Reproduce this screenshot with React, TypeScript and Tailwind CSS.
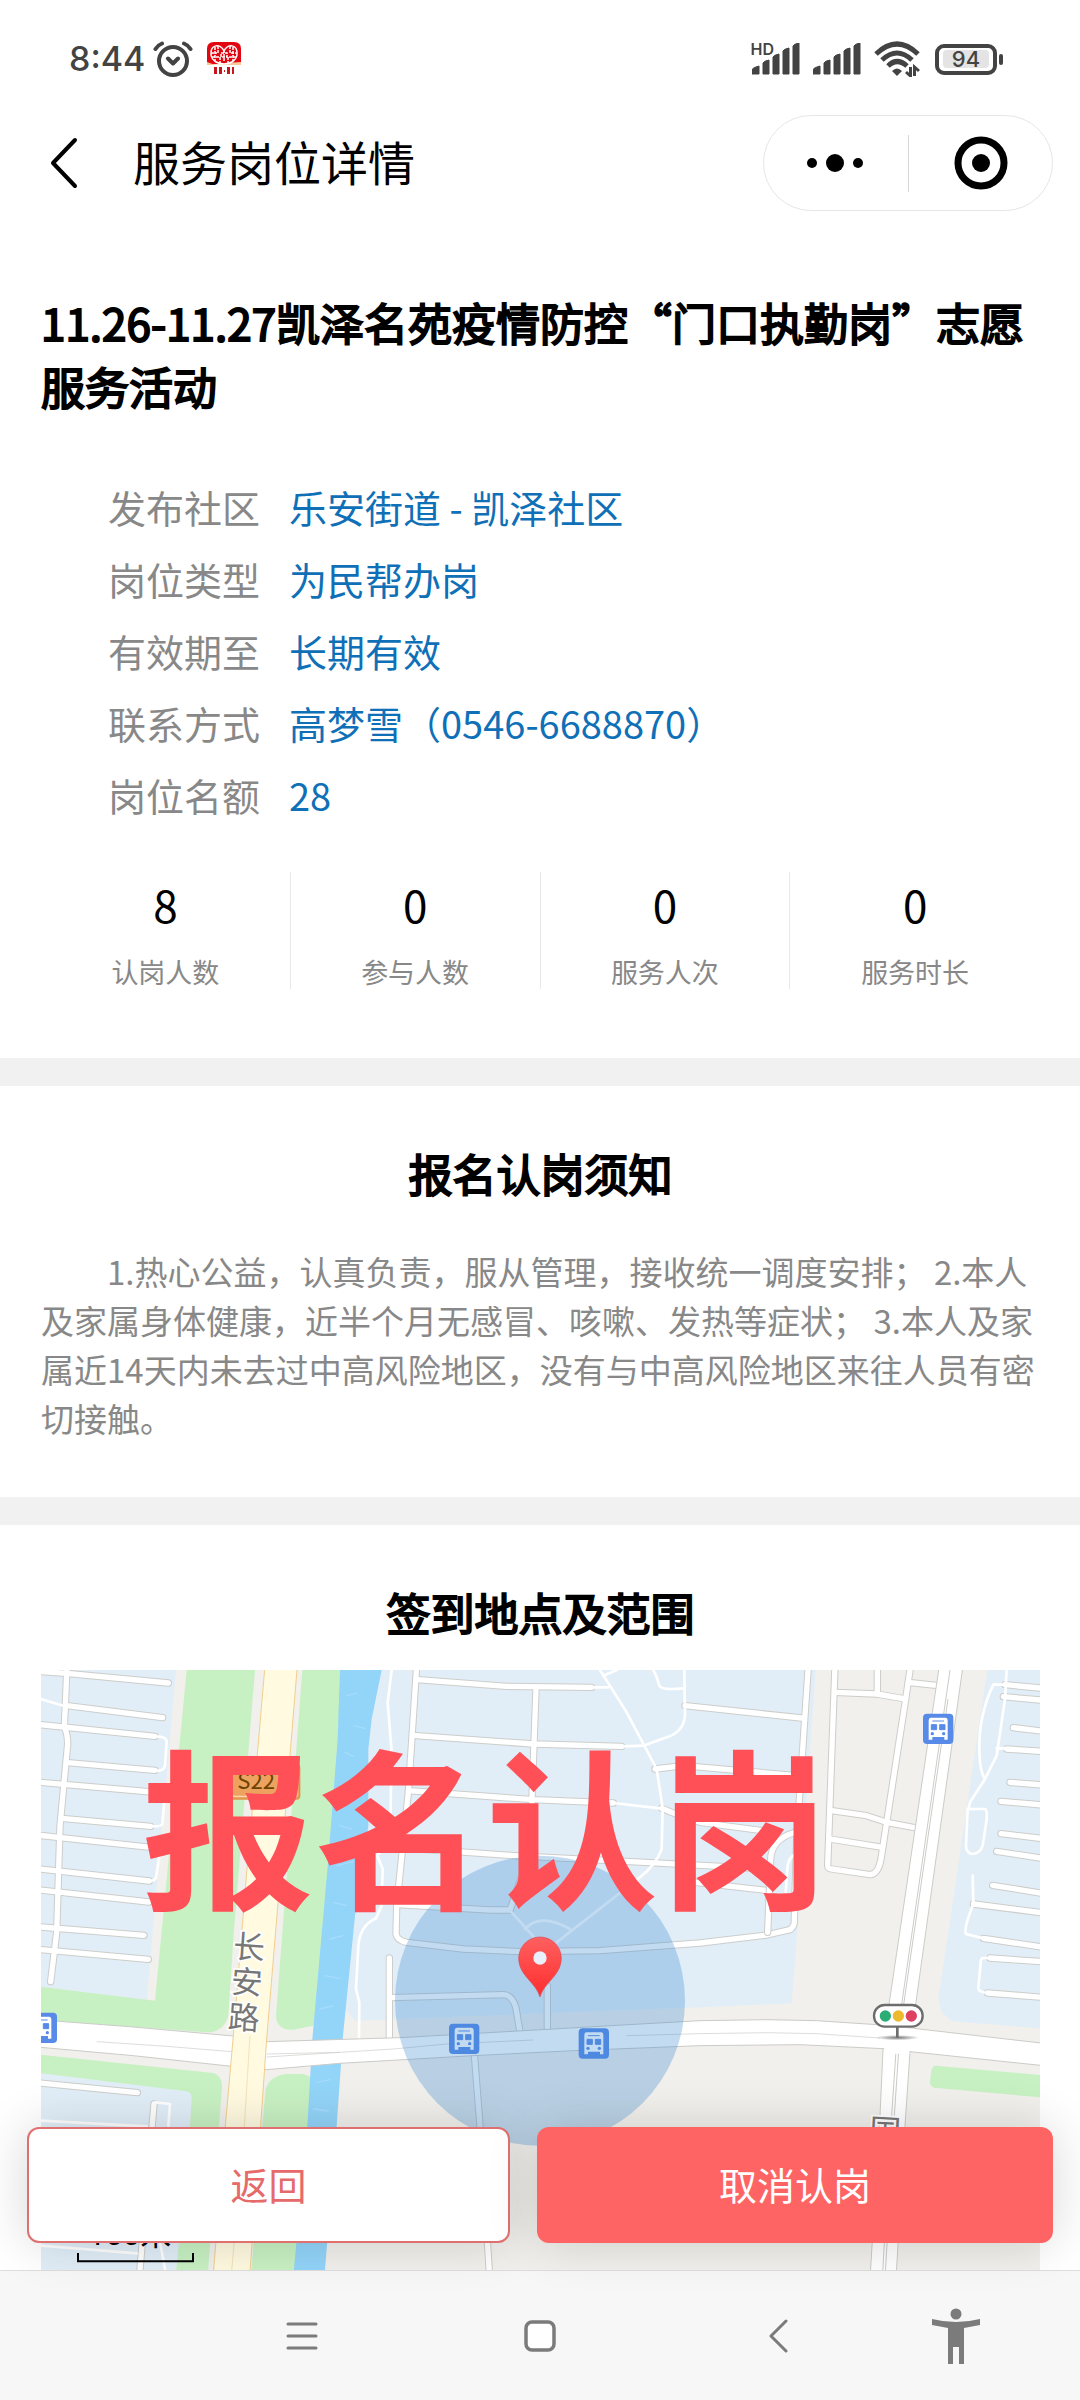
import clsx from 'clsx';

const details = [
  { label: '发布社区', value: '乐安街道 - 凯泽社区' },
  { label: '岗位类型', value: '为民帮办岗' },
  { label: '有效期至', value: '长期有效' },
  { label: '联系方式', value: '高梦雪（0546-6688870）' },
  { label: '岗位名额', value: '28' },
];

const stats = [
  { label: '认岗人数', value: 8 },
  { label: '参与人数', value: 0 },
  { label: '服务人次', value: 0 },
  { label: '服务时长', value: 0 },
];

// street geometry, split into west / centre / east blocks
const westStreets = [
  'M201 80L193 265Q203 285 203 315L180 560L170 880L152 1028',
  'M100 96L200 103L505 132',
  'M201 200L488 236',
  'M100 255L465 292',
  'M203 371L465 394',
  'M100 428L200 437L490 462',
  'M185 538L452 562',
  'M100 587L452 625',
  'M100 688L448 726',
  'M100 751L447 789',
  'M100 862L432 889',
  'M100 930L445 961',
  'M100 1330L412 1361',
  'M462 1395L420 1890',
];

const westPaths = [
  'M123 180L200 203',
  'M465 292Q502 292 500 310L495 380Q492 396 465 396',
  'M495 462L487 555Q485 563 455 562',
  'M480 640L468 715Q465 726 448 726',
  'M465 1390L510 1395L505 1460',
  'M123 1445L440 1462',
  'M123 1820L410 1843',
  'M480 1810L495 1890',
];

const centreStreets = [
  'M230 80L205 460L170 800L168 885Q172 905 200 910L370 930L540 938L780 935L1080 912L1280 888L1350 872Q1365 862 1363 840L1370 600L1405 80',
  'M232 122L500 142L755 145',
  'M228 290L580 315L845 322',
  'M588 150L570 640L510 813',
  'M205 455L580 482L820 492',
  'M195 627L520 650L800 664L1200 685L1290 692',
  'M175 797L450 813L510 813',
  'M1020 725L1285 755',
  'M148 957V1195',
  'M150 1076L490 1067Q518 1068 528 1108L540 1180',
  'M622 1040V1180',
  'M403 1245L420 1460L448 1900',
  'M1035 200L1385 237',
  'M945 390L1030 380L1370 410',
  'M965 508L1020 530L1080 550L1290 578',
];

const centrePaths = [
  'M155 93L143 190L155 340L150 600L112 650L128 690L125 800L108 838Q60 860 55 920L48 1050L58 1090L57 1195',
  'M780 93L860 220L950 390L968 508L965 630Q950 675 900 715L650 910',
  'M755 145H805',
  'M790 110L830 93',
  'M940 93Q950 110 958 140Q965 155 1030 148',
  'M1033 93L1035 230Q1030 280 980 295L910 320L850 322',
  'M820 492L960 508',
  'M515 820L580 892',
  'M555 870Q600 820 690 870',
];

const eastStreets = [
  'M405 80L383 680Q383 688 395 690L510 707Q535 705 543 660L560 550L617 180L632 80',
  'M405 160L530 165L617 180',
  'M532 80V165',
  'M625 130L715 140',
  'M395 515L500 530L560 550L655 568',
  'M390 600L548 625',
  'M285 580Q215 600 212 660L203 880',
  'M915 137L1040 149',
  'M910 173L1040 185',
  'M940 266L1040 278',
  'M920 330L1040 338',
  'M930 430L1040 439',
  'M903 487L1040 499',
  'M903 584L1040 600',
  'M890 637L1040 660',
  'M878 739L1040 765',
  'M820 795L1040 823',
  'M850 898L1040 926',
  'M870 957L1040 969',
  'M863 1062L1040 1076',
];

const eastPaths = [
  'M290 645Q265 650 262 690L255 790L215 815',
  'M920 93L915 180L890 350L855 420L810 490L805 510H855Q862 512 860 540L848 620Q840 645 815 645Q798 640 798 620L803 510',
  'M915 137L880 137Q835 230 838 340Q840 400 855 420',
  'M890 328H920',
  'M818 710L820 795Q790 870 798 885L850 898',
  'M870 957H850Q842 957 842 970L835 1048Q835 1060 863 1062',
];

const busStops = [
  { x: 80, y: 1121 },
  { x: 1347, y: 1154 },
  { x: 1736, y: 1168 },
];

const headingClass = 'text-[44px] leading-[64px] font-normal [-webkit-text-stroke:2px_#000]';

function Streets({ lines, paths, x = 0 }: { lines: string[]; paths: string[]; x?: number }) {
  return (
    <g transform={`translate(${x} 0)`} fill="none" strokeLinecap="round" strokeLinejoin="round">
      {lines.map((d) => <path key={d} d={d} stroke="#cdcdcb" strokeWidth="22" />)}
      {paths.map((d) => <path key={d} d={d} stroke="#fff" strokeWidth="8" />)}
      {lines.map((d) => <path key={d} d={d} stroke="#fff" strokeWidth="16" />)}
    </g>
  );
}

function BusStop({ x, y }: { x: number; y: number }) {
  return (
    <g transform={`translate(${x} ${y})`}>
      <rect width="91" height="91" rx="12" fill="#588ae8" />
      <path d="M23 12H68Q74 12 74 20V78H64V70H28V78H17V20Q17 12 23 12Z" fill="#fff" />
      <path d="M28 22H63M25 33H41V48H25ZM50 33H66V48H50Z" fill="#588ae8" stroke="#588ae8" strokeWidth="3" />
      <circle cx="28" cy="60" r="5" fill="#588ae8" />
      <circle cx="62" cy="60" r="5" fill="#588ae8" />
    </g>
  );
}

function MapView() {
  return (
    <svg viewBox="123 93 2997 1860" className="block w-full" role="img" aria-label="签到地点地图">
      <defs>
        <linearGradient id="pin" x1="0" y1="0" x2="0" y2="1">
          <stop offset="0" stopColor="#ff6060" />
          <stop offset="1" stopColor="#ff2d2d" />
        </linearGradient>
        <radialGradient id="poleShadow">
          <stop offset="0" stopColor="#777" />
          <stop offset="1" stopColor="#777" stopOpacity="0" />
        </radialGradient>
      </defs>
      <rect x="123" y="93" width="2997" height="1860" fill="#f1f0ec" />

      {/* blocks */}
      <g fill="#e1eef8">
        <path d="M123 93H528L440 1083L123 1043Z" />
        <path d="M1100 93H2447L2390 900L2375 1093L2100 1105L1065 1145L1020 1090Z" />
        <path d="M2962 93H3120V1168L2855 1147L2825 1120L2815 1080Z" />
        <path d="M123 1300L560 1355Q576 1360 575 1380L570 1460L525 1953H123Z" />
      </g>

      {/* parks */}
      <g fill="#c8f1c3">
        <path d="M560 93H765L700 900L685 1130Q670 1180 620 1180L123 1143V1043L465 1085Z" />
        <path d="M907 93H1030L1000 900L940 1160L880 1172Q830 1175 828 1130Z" />
        <path d="M123 1247L640 1302Q668 1310 666 1345L657 1460L620 1953H523L570 1460L575 1380Q576 1360 560 1357L123 1303Z" />
        <path d="M797 1350Q810 1310 860 1305H910L935 1315L925 1460L890 1953H750L787 1460Z" />
        <path d="M2808 1280L3120 1308V1375L2802 1346Q2790 1342 2790 1330L2793 1300Q2795 1280 2808 1280Z" />
      </g>

      {/* river */}
      <path d="M1020 93L1013 300L985 660L937 1200L922 1460L876 1953H970L1010 1460L1023 1276L1028 1200L1065 830L1105 560V330L1115 240L1145 93Z" fill="#93d4f9" />
      <g stroke="#a6dcfb" strokeWidth="4" strokeLinecap="round">
        <path d="M1040 170L1070 163M1060 260L1095 268M1035 340L1060 352M1050 450L1090 440M1020 560L1055 570M1010 680L1060 668M1000 790L1040 800M990 900L1030 890M975 1010L1020 1018M960 1110L1000 1100M950 1330L990 1322M940 1410L985 1416" />
      </g>

      <Streets lines={westStreets} paths={westPaths} />
      <Streets lines={centreStreets} paths={centrePaths} x={1020} />
      <Streets lines={eastStreets} paths={eastPaths} x={2100} />

      {/* dual carriageways */}
      <g fill="#fff" stroke="#cbcbc8" strokeWidth="3">
        <path d="M2818 80L2665 1110H2745L2889 80Z" />
        <path d="M2852 80L2703 1110M2844 180L2709 1110" fill="none" />
        <path d="M2650 1210L2640 1430L2608 1953H2686L2715 1460L2732 1210Z" />
        <path d="M2688 1236L2675 1430L2645 1953M2696 1236L2683 1430L2653 1953" fill="none" />
        <path d="M100 1141L400 1164L700 1191L800 1208L1200 1196L1660 1170L1920 1155L2100 1145L2300 1142L2450 1145L2630 1157L2740 1168L3140 1214V1281L2730 1238L2650 1229L2400 1217L2100 1220L1720 1235L1420 1250L1020 1273L800 1292L695 1282L400 1250L100 1223Z" />
        <path d="M290 1208L500 1222L695 1238M800 1245L1020 1240L1180 1230L1340 1215L1600 1203M1880 1190L2100 1184L2300 1181L2450 1184L2640 1197M800 1254L1020 1240" fill="none" strokeWidth="2" />
      </g>
      <path d="M2653 1222H2728V1244H2653Z" fill="#fff" />
      <path d="M2669 1100H2741V1168H2669Z" fill="#fff" />

      {/* S22 highway */}
      <path d="M795 80L770 370L740 700L700 1190L676 1460L636 1953H746L782 1460L800 1200L835 780L892 80Z" fill="#fffae0" stroke="#f0cf8f" strokeWidth="3" />
      <path d="M750 1190L733 1460L690 1953" fill="none" stroke="#f3e3b8" strokeWidth="3" />
      <rect x="689" y="376" width="210" height="104" rx="10" fill="#eda35f" stroke="#e0924a" strokeWidth="4" />
      <rect x="697" y="384" width="194" height="88" rx="6" fill="none" stroke="#fbd9ae" strokeWidth="4" />
      <text x="712" y="450" fontSize="66" fill="#6b4300" className="font-['Noto_Sans_CJK_SC',sans-serif]">S22</text>

      <g fontSize="95" fill="#777" stroke="#fff" strokeWidth="10" paintOrder="stroke" textAnchor="middle" className="font-['Noto_Sans_CJK_SC',sans-serif]">
        <text transform="translate(745 959) rotate(4)">长</text>
        <text transform="translate(738 1064) rotate(4)">安</text>
        <text transform="translate(729 1170) rotate(4)">路</text>
        <text transform="translate(2654 1510) rotate(3)">国</text>
      </g>

      {busStops.map((stop) => <BusStop key={stop.x} {...stop} />)}
      <BusStop x={2769} y={224} />

      {/* check-in range */}
      <circle cx="1620" cy="1085" r="435" fill="#3787d0" fillOpacity="0.3" />
      <path d="M1620 1074C1608 1030 1556 1010 1556 958A64 64 0 0 1 1684 958C1684 1010 1632 1030 1620 1074Z" fill="url(#pin)" stroke="#d94a55" strokeWidth="2" />
      <circle cx="1620" cy="957" r="20" fill="#eaf0fb" />

      {/* traffic light */}
      <ellipse cx="2692" cy="1196" rx="66" ry="8" fill="url(#poleShadow)" />
      <path d="M2692 1162V1196" stroke="#6d6d6d" strokeWidth="8" />
      <rect x="2622" y="1098" width="146" height="65" rx="32" fill="#fff" stroke="#6d6d6d" strokeWidth="7" />
      <circle cx="2656" cy="1131" r="17" fill="#2aad74" />
      <circle cx="2695" cy="1131" r="17" fill="#edb92e" />
      <circle cx="2734" cy="1131" r="17" fill="#de405f" />

      {/* scale */}
      <text x="264" y="1817" fontSize="93" className="font-[Roboto,'Noto_Sans_CJK_SC',sans-serif]">100米</text>
      <path d="M234 1842V1867H579V1842" fill="none" stroke="#000" strokeWidth="6" />
    </svg>
  );
}

function SignalBars() {
  return (
    <svg viewBox="0 0 49 32" className="h-8 w-[49px]" fill="#434343">
      <path d="M0 31V27Q0 25 7 23V31ZM11 31V20Q12 18 17 17V31ZM21 31V14Q22 12 27 11V31ZM31 31V8Q32 6 37 5V31ZM41 31V3Q42 1 47 0V31Z" stroke="#434343" strokeWidth="1" strokeLinejoin="round" />
    </svg>
  );
}

function StatusBar() {
  return (
    <div className="flex h-[104px] items-center justify-between pt-[14px] pr-[83px] pl-[69px] text-[#434343]">
      <div className="flex items-center">
        <span className="font-[Inter,sans-serif] text-[34px] leading-10 font-medium">8:44</span>
        <svg viewBox="0 0 40 36" className="ml-2 h-9 w-10" fill="none" stroke="#434343" strokeWidth="4" strokeLinecap="round" strokeLinejoin="round">
          <circle cx="20" cy="20" r="14" />
          <path d="M2.500 8Q5 4 9 2.500M31 2.500Q35 4 37.500 8M15 17.500L20 22.500L25 17.500" />
        </svg>
        <svg viewBox="0 0 36 36" className="ml-[13px] size-9">
          <path d="M1 23V8Q1 1 8 1H28Q35 1 35 8V23Z" fill="#e1060f" />
          <path d="M1 21Q9 25 18 23T35 21V24H1Z" fill="#f7c79a" />
          <g fill="none" stroke="#fff" strokeWidth="1.500">
            <path d="M5 14C4 2 15 3 18 10C21 3 32 2 31 14C30 20 24 23 18 23S6 20 5 14Z" />
            <path d="M9 6V20M12 5V12M14 16V22M24 5V12M27 6V20M22 16V22M5 12H11M25 12H31M6 16H13M23 16H30M15 12H21V16H15ZM18 9V20" strokeDasharray="3 1" />
          </g>
          <path d="M8 26H11V33H8ZM13 26H16V33H13ZM21 26H24V33H21ZM26 26H28V33H26ZM18 29H19V31H18Z" fill="#c4161c" />
        </svg>
      </div>
      <div className="flex items-center">
        <div className="relative">
          <span className="absolute -top-1 right-[27px] font-[Inter,sans-serif] text-base leading-5 font-semibold">HD</span>
          <SignalBars />
        </div>
        <span className="ml-3"><SignalBars /></span>
        <svg viewBox="0 0 48 36" className="ml-3 h-9 w-12" fill="none" stroke="#434343" strokeWidth="5">
          <path d="M2 13Q23 -7 44 13M8 19Q23 5 38 19M14 25Q23 16 33 25" />
          <path d="M18 30Q23 25 28 30L23 35Z" fill="#434343" stroke="none" />
          <path d="M36.500 26V35L32 31M40.500 35V26L45 30" strokeWidth="3" />
        </svg>
        <div className="relative ml-[13px] flex h-[31px] w-[62px] items-center justify-center rounded-[9px] border-4 border-[#434343]">
          <span className="flex h-[18px] w-[46px] items-center justify-center rounded-sm bg-[#e4e4e4] font-[Inter,sans-serif] text-[22px] leading-[18px] font-medium">94</span>
          <span className="absolute top-[6px] -right-[10px] h-[11px] w-1 rounded-sm bg-[#434343]" />
        </div>
      </div>
    </div>
  );
}

function NavHeader() {
  return (
    <header className="flex h-[118px] items-center pr-[27px] pl-[50px]">
      <button aria-label="返回上一页">
        <svg viewBox="0 0 28 52" className="h-[52px] w-7" fill="none" stroke="#000" strokeWidth="4" strokeLinecap="round" strokeLinejoin="round">
          <path d="M25 3L3 26L25 49" />
        </svg>
      </button>
      <h1 className="ml-[55px] pb-1 text-[47px] leading-[64px]">服务岗位详情</h1>
      <div className="ml-auto flex h-24 w-[290px] items-center rounded-full border border-[#e6e6e6]">
        <button className="flex flex-1 justify-center" aria-label="更多">
          <svg viewBox="0 0 58 20" className="h-5 w-[58px]">
            <circle cx="5" cy="10" r="5" />
            <circle cx="28" cy="10" r="9" />
            <circle cx="51" cy="10" r="5" />
          </svg>
        </button>
        <span className="h-[57px] w-px bg-[#d8d8d8]" />
        <button className="flex flex-1 justify-center" aria-label="关闭">
          <svg viewBox="0 0 56 54" className="h-[54px] w-14">
            <circle cx="29" cy="27" r="23" fill="none" stroke="#000" strokeWidth="7" />
            <circle cx="29" cy="27" r="9" />
          </svg>
        </button>
      </div>
    </header>
  );
}

function SystemNav() {
  return (
    <nav className="flex h-[130px] items-center border-t border-[#dedede] bg-[#f7f7f7]">
      <span className="w-[17%]" />
      <button className="flex w-[22%] justify-center" aria-label="菜单">
        <svg viewBox="0 0 32 32" className="size-8" stroke="#7b7b7b" strokeWidth="3" strokeLinecap="round">
          <path d="M2 4H30M2 16H30M2 28H30" />
        </svg>
      </button>
      <button className="flex w-[22%] justify-center" aria-label="主页">
        <svg viewBox="0 0 32 32" className="size-8">
          <rect x="2" y="2" width="28" height="28" rx="6" fill="#fff" stroke="#7b7b7b" strokeWidth="3.500" />
        </svg>
      </button>
      <button className="flex w-[22%] justify-center" aria-label="返回键">
        <svg viewBox="0 0 20 34" className="h-[34px] w-5" fill="none" stroke="#7b7b7b" strokeWidth="3" strokeLinecap="round" strokeLinejoin="round">
          <path d="M18 2L3 17L18 32" />
        </svg>
      </button>
      <button className="flex w-[11%] justify-center" aria-label="无障碍">
        <svg viewBox="0 0 50 56" className="h-14 w-[50px]" fill="#7b7b7b">
          <circle cx="25" cy="6" r="5.500" />
          <path d="M1 11Q25 17 49 11V17L33 20V56H28V39H22V56H17V20L1 17Z" />
        </svg>
      </button>
    </nav>
  );
}

export default function App() {
  return (
    <div lang="zh-CN" className="flex h-screen flex-col bg-white font-['Noto_Sans_CJK_SC',sans-serif] text-black">
      <StatusBar />
      <NavHeader />

      <div className="relative min-h-0 flex-1">
        <main className="h-full overflow-y-auto [scrollbar-width:none]">
          <section className="pt-[68px] pr-10 pb-[69px] pl-[41px]">
            <h2 className={headingClass}>
              11.26-11.27凯泽名苑疫情防控“门口执勤岗”志愿服务活动
            </h2>
            <dl className="mt-[53px] pl-[67px] text-[38px] leading-[72px]">
              {details.map((item) => (
                <div key={item.label} className="flex gap-[29px]">
                  <dt className="text-[#888]">{item.label}</dt>
                  <dd className="text-[#0f70b7]">{item.value}</dd>
                </div>
              ))}
            </dl>
            <div className="mt-[41px] grid grid-cols-4">
              {stats.map((item, i) => (
                <div key={item.label} className={clsx('text-center', i < stats.length - 1 && 'border-r border-[#e8e8e8]')}>
                  <p className="text-[44px] leading-[64px]">{item.value}</p>
                  <p className="mt-[19px] text-[27px] leading-[34px] text-[#888]">{item.label}</p>
                </div>
              ))}
            </div>
          </section>

          <section className="border-t-28 border-[#f1f1f1] pt-[55px] pr-10 pb-[54px] pl-[41px]">
            <h2 className={clsx(headingClass, 'text-center')}>报名认岗须知</h2>
            <p className="mt-[42px] indent-[66px] text-[33px] leading-[49px] text-[#888]">
              1.热心公益，认真负责，服从管理，接收统一调度安排； 2.本人及家属身体健康，近半个月无感冒、咳嗽、发热等症状； 3.本人及家属近14天内未去过中高风险地区，没有与中高风险地区来往人员有密切接触。
            </p>
          </section>

          <section className="border-t-28 border-[#f1f1f1] pt-[55px] pr-10 pl-[41px]">
            <h2 className={clsx(headingClass, 'text-center')}>签到地点及范围</h2>
            <div className="relative mt-[26px]">
              <MapView />
              <p className="absolute top-[51px] left-[101px] text-[172px] leading-[200px] font-bold whitespace-nowrap text-[#ff5058]">报名认岗</p>
            </div>
          </section>
        </main>

        <div className="absolute inset-x-0 bottom-[27px] flex gap-[27px] px-[27px] text-[38px]">
          <button className="h-[116px] grow-13 basis-0 rounded-xl border-2 border-[#e07070] bg-white pb-1 text-[#e66a6a] shadow-[0_0_50px_rgba(0,0,0,0.16)]">返回</button>
          <button className="h-[116px] grow-14 basis-0 rounded-xl bg-[#ff6464] pb-1 text-white shadow-[0_0_50px_rgba(0,0,0,0.16)]">取消认岗</button>
        </div>
      </div>

      <SystemNav />
    </div>
  );
}
